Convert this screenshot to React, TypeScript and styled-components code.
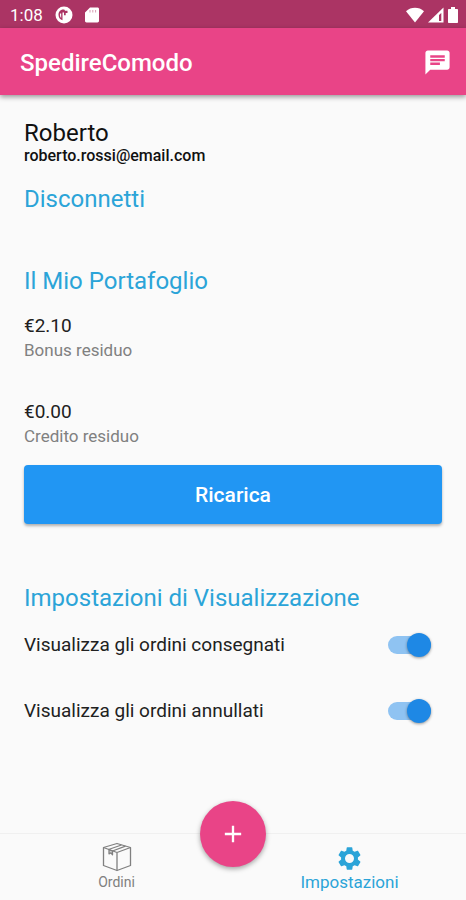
import React, { useState } from "react";
import styled, { createGlobalStyle } from "styled-components";

const color = {
  pink: "#e94487",
  pinkDark: "#ab3464",
  page: "#fafafa",
  blue: "#2196f3",
  sky: "#2ba4d8",
  ink: "#212121",
  muted: "#808080",
};

const GlobalStyle = createGlobalStyle`
  * { box-sizing: border-box; }
  body {
    margin: 0;
    background: ${color.page};
    color: ${color.ink};
    font-family: Roboto, "Liberation Sans", sans-serif;
  }
  button { font-family: inherit; border: 0; padding: 0; cursor: pointer; }
`;

const Screen = styled.div`
  display: flex;
  flex-direction: column;
  min-height: 100vh;
`;

const StatusBar = styled.div`
  display: flex;
  align-items: center;
  justify-content: space-between;
  height: 28px;
  padding: 2px 8px 0 10px;
  background: ${color.pinkDark};
  color: #fff;
  font-size: 17px;
  line-height: 20px;
`;

const StatusGroup = styled.div<{ $gap: number }>`
  display: flex;
  align-items: center;
  gap: ${(p) => p.$gap}px;
  svg { display: block; }
`;

const AppBar = styled.header`
  display: flex;
  align-items: center;
  justify-content: space-between;
  height: 67px;
  padding: 2px 14px 0 20px;
  background: ${color.pink};
  color: #fff;
  box-shadow: 0 2px 5px rgba(0, 0, 0, 0.4);
`;

const AppTitle = styled.h1`
  margin: 0;
  font-size: 24px;
  font-weight: 500;
  line-height: 28px;
`;

const IconButton = styled.button`
  display: flex;
  background: none;
  color: #fff;
`;

const Content = styled.main`
  display: flex;
  flex: 1;
  flex-direction: column;
  padding: 24px 24px 58px;
`;

const Profile = styled.section`
  display: flex;
  flex-direction: column;
  align-items: flex-start;
`;

const UserName = styled.h2`
  margin: 0;
  font-size: 24px;
  font-weight: 400;
  line-height: 28px;
  color: #111;
`;

const Email = styled.p`
  margin: 0;
  font-size: 16px;
  font-weight: 500;
  line-height: 18px;
  color: #111;
`;

const TextButton = styled.button`
  margin-top: 20px;
  background: none;
  color: ${color.sky};
  font-size: 24px;
  font-weight: 400;
  line-height: 28px;
`;

const Wallet = styled.section`
  display: flex;
  flex-direction: column;
  margin-top: 54px;
`;

const SectionTitle = styled.h2`
  margin: 0;
  color: ${color.sky};
  font-size: 24px;
  font-weight: 400;
  line-height: 28px;
`;

const Balances = styled.dl`
  display: flex;
  flex-direction: column;
  gap: 36px;
  margin: 18px 0 16px;
`;

const Balance = styled.div`
  display: flex;
  flex-direction: column-reverse;
`;

const Amount = styled.dd`
  margin: 0;
  font-size: 19px;
  line-height: 25px;
`;

const Caption = styled.dt`
  color: ${color.muted};
  font-size: 17px;
  line-height: 25px;
`;

const PrimaryButton = styled.button`
  height: 59px;
  border-radius: 4px;
  background: ${color.blue};
  color: #fff;
  font-size: 21px;
  font-weight: 500;
  box-shadow: 0 2px 3px rgba(0, 0, 0, 0.3);
`;

const Preferences = styled.section`
  display: flex;
  flex-direction: column;
  margin-top: 60px;
`;

const SwitchRow = styled.label`
  display: flex;
  align-items: center;
  justify-content: space-between;
  height: 66px;
  padding-right: 11px;
  font-size: 19px;
  line-height: 24px;
  cursor: pointer;
`;

const Switch = styled.input`
  appearance: none;
  display: flex;
  align-items: center;
  width: 43px;
  height: 18px;
  margin: 0;
  border-radius: 9px;
  background: #8fc3f2;
  cursor: pointer;

  &::before {
    content: "";
    flex: none;
    width: 24px;
    height: 24px;
    border-radius: 50%;
    background: #1e88e5;
    box-shadow: 0 1px 3px rgba(0, 0, 0, 0.4);
  }
  &:not(:checked) { background: #bdbdbd; }
  &:not(:checked)::before { background: #fafafa; }
  &:checked::before { margin-left: auto; }
`;

const BottomNav = styled.nav`
  position: sticky;
  bottom: 0;
  display: grid;
  grid-template-columns: 1fr 1fr;
  height: 67px;
  border-top: 1px solid #f0f0f0;
  background: ${color.page};
`;

const NavLink = styled.a<{ $active?: boolean }>`
  display: flex;
  flex-direction: column;
  align-items: center;
  justify-content: flex-end;
  padding-bottom: 8px;
  color: ${(p) => (p.$active ? color.sky : color.muted)};
  font-size: ${(p) => (p.$active ? 17 : 14)}px;
  line-height: 20px;
  text-decoration: none;
  svg { display: block; }
`;

const AddButton = styled.button`
  position: absolute;
  top: -33px;
  left: 50%;
  display: flex;
  align-items: center;
  justify-content: center;
  width: 66px;
  height: 66px;
  margin-left: -33px;
  border-radius: 50%;
  background: ${color.pink};
  color: #fff;
  box-shadow: 0 2px 5px rgba(0, 0, 0, 0.35);
`;

const DiscIcon = () => (
  <svg width="18" height="18" viewBox="0 0 18 18" aria-hidden="true">
    <circle cx="9" cy="9" r="8.5" fill="#fff" />
    <path
      d="M8.500 3.500C5 3.500 3.300 6 3.500 9c.2 2.700 1.700 4.700 4 5.300V6.500h1.500v2.700h1.700V7h1.800V4.800H10C9.800 4 9.300 3.500 8.500 3.500z"
      fill={color.pinkDark}
    />
    <path d="M5 7.500h1.200v4.500C5.200 11 4.800 9.500 5 7.500z" fill="#fff" />
  </svg>
);

const SdIcon = () => (
  <svg width="14" height="16" viewBox="0 0 14 16" aria-hidden="true">
    <path d="M5 .5h7.5c.8 0 1.500.6 1.500 1.400v12.200c0 .8-.7 1.400-1.500 1.400h-11C.7 15.500 0 14.900 0 14.100V5.500z" fill="#fff" />
    <path d="M5 3v2.500M7.800 3v2.500M10.600 3v2.500" stroke="#d79bb3" strokeWidth="1" />
  </svg>
);

const WifiIcon = () => (
  <svg width="18" height="16" viewBox="0 0 18 16" aria-hidden="true">
    <path d="M0 4.200C5-.4 13-.4 18 4.200L9 15.500z" fill="#fff" />
  </svg>
);

const SignalIcon = () => (
  <svg width="16" height="16" viewBox="0 0 16 16" aria-hidden="true">
    <path d="M0 15.500 15.500.5v15z" fill="#fff" />
    <path d="M11 8v6h2.300V6z" fill={color.pinkDark} />
  </svg>
);

const BatteryIcon = () => (
  <svg width="10" height="16" viewBox="0 0 10 16" aria-hidden="true">
    <path d="M3 0h4v2h2c.6 0 1 .4 1 1v12c0 .6-.4 1-1 1H1c-.6 0-1-.4-1-1V3c0-.6.4-1 1-1h2z" fill="#fff" />
  </svg>
);

const ChatIcon = () => (
  <svg width="29" height="29" viewBox="0 0 24 24" fill="currentColor" aria-hidden="true">
    <path d="M20 2H4c-1.100 0-1.990.9-1.990 2L2 22l4-4h14c1.100 0 2-.9 2-2V4c0-1.100-.9-2-2-2zM6 9h12v2H6V9zm8 5H6v-2h8v2zm4-6H6V6h12v2z" />
  </svg>
);

const BoxIcon = () => (
  <svg
    width="30"
    height="30"
    viewBox="0 0 30 30"
    fill="none"
    stroke="currentColor"
    strokeWidth="1.300"
    strokeLinejoin="round"
    aria-hidden="true"
  >
    <path d="M15 1.500 28.500 5.500v18L15 28.500 1.500 23.500v-18z" />
    <path d="M1.500 5.500 15 10.500l13.500-5M15 10.500v18" />
    <path d="M6.500 7.500 19.500 3M10.500 9 23.500 4.200" />
    <path d="M7 7.500v4.300l2-1 1.500 2V9z" fill="currentColor" fillOpacity=".35" />
  </svg>
);

const GearIcon = () => (
  <svg width="27" height="27" viewBox="0 0 24 24" fill="currentColor" aria-hidden="true">
    <path d="M19.430 12.980c.04-.32.07-.64.07-.98s-.03-.66-.07-.98l2.110-1.650c.19-.15.24-.42.12-.64l-2-3.460c-.12-.22-.39-.3-.61-.22l-2.490 1c-.52-.4-1.080-.73-1.690-.98l-.38-2.650C14.460 2.180 14.250 2 14 2h-4c-.25 0-.46.18-.49.42l-.38 2.650c-.61.25-1.170.59-1.690.98l-2.490-1c-.23-.09-.49 0-.61.22l-2 3.460c-.13.22-.07.49.12.64l2.110 1.650c-.04.32-.07.65-.07.98s.03.66.07.98l-2.110 1.650c-.19.15-.24.42-.12.64l2 3.460c.12.22.39.3.61.22l2.490-1c.52.4 1.080.73 1.690.98l.38 2.650c.03.24.24.42.49.42h4c.25 0 .46-.18.49-.42l.38-2.650c.61-.25 1.170-.59 1.690-.98l2.490 1c.23.09.49 0 .61-.22l2-3.460c.12-.22.07-.49-.12-.64l-2.110-1.650zM12 16a4 4 0 1 1 0-8 4 4 0 0 1 0 8z" />
  </svg>
);

const PlusIcon = () => (
  <svg width="28" height="28" viewBox="0 0 24 24" fill="currentColor" aria-hidden="true">
    <path d="M19 13h-6v6h-2v-6H5v-2h6V5h2v6h6v2z" />
  </svg>
);

const balances = [
  { label: "Bonus residuo", amount: "€2.10" },
  { label: "Credito residuo", amount: "€0.00" },
];

export default function App() {
  const [delivered, setDelivered] = useState(true);
  const [cancelled, setCancelled] = useState(true);

  return (
    <>
      <GlobalStyle />
      <Screen>
        <StatusBar>
          <StatusGroup $gap={12}>
            <span>1:08</span>
            <DiscIcon />
            <SdIcon />
          </StatusGroup>
          <StatusGroup $gap={4}>
            <WifiIcon />
            <SignalIcon />
            <BatteryIcon />
          </StatusGroup>
        </StatusBar>
        <AppBar>
          <AppTitle>SpedireComodo</AppTitle>
          <IconButton type="button" aria-label="Messaggi">
            <ChatIcon />
          </IconButton>
        </AppBar>
        <Content>
          <Profile>
            <UserName>Roberto</UserName>
            <Email>roberto.rossi@email.com</Email>
            <TextButton type="button">Disconnetti</TextButton>
          </Profile>
          <Wallet>
            <SectionTitle>Il Mio Portafoglio</SectionTitle>
            <Balances>
              {balances.map((b) => (
                <Balance key={b.label}>
                  <Caption>{b.label}</Caption>
                  <Amount>{b.amount}</Amount>
                </Balance>
              ))}
            </Balances>
            <PrimaryButton type="button">Ricarica</PrimaryButton>
          </Wallet>
          <Preferences>
            <SectionTitle>Impostazioni di Visualizzazione</SectionTitle>
            <SwitchRow>
              Visualizza gli ordini consegnati
              <Switch type="checkbox" role="switch" checked={delivered} onChange={(e) => setDelivered(e.target.checked)} />
            </SwitchRow>
            <SwitchRow>
              Visualizza gli ordini annullati
              <Switch type="checkbox" role="switch" checked={cancelled} onChange={(e) => setCancelled(e.target.checked)} />
            </SwitchRow>
          </Preferences>
        </Content>
        <BottomNav>
          <NavLink href="#ordini">
            <BoxIcon />
            Ordini
          </NavLink>
          <NavLink href="#impostazioni" $active aria-current="page">
            <GearIcon />
            Impostazioni
          </NavLink>
          <AddButton type="button" aria-label="Nuovo ordine">
            <PlusIcon />
          </AddButton>
        </BottomNav>
      </Screen>
    </>
  );
}
